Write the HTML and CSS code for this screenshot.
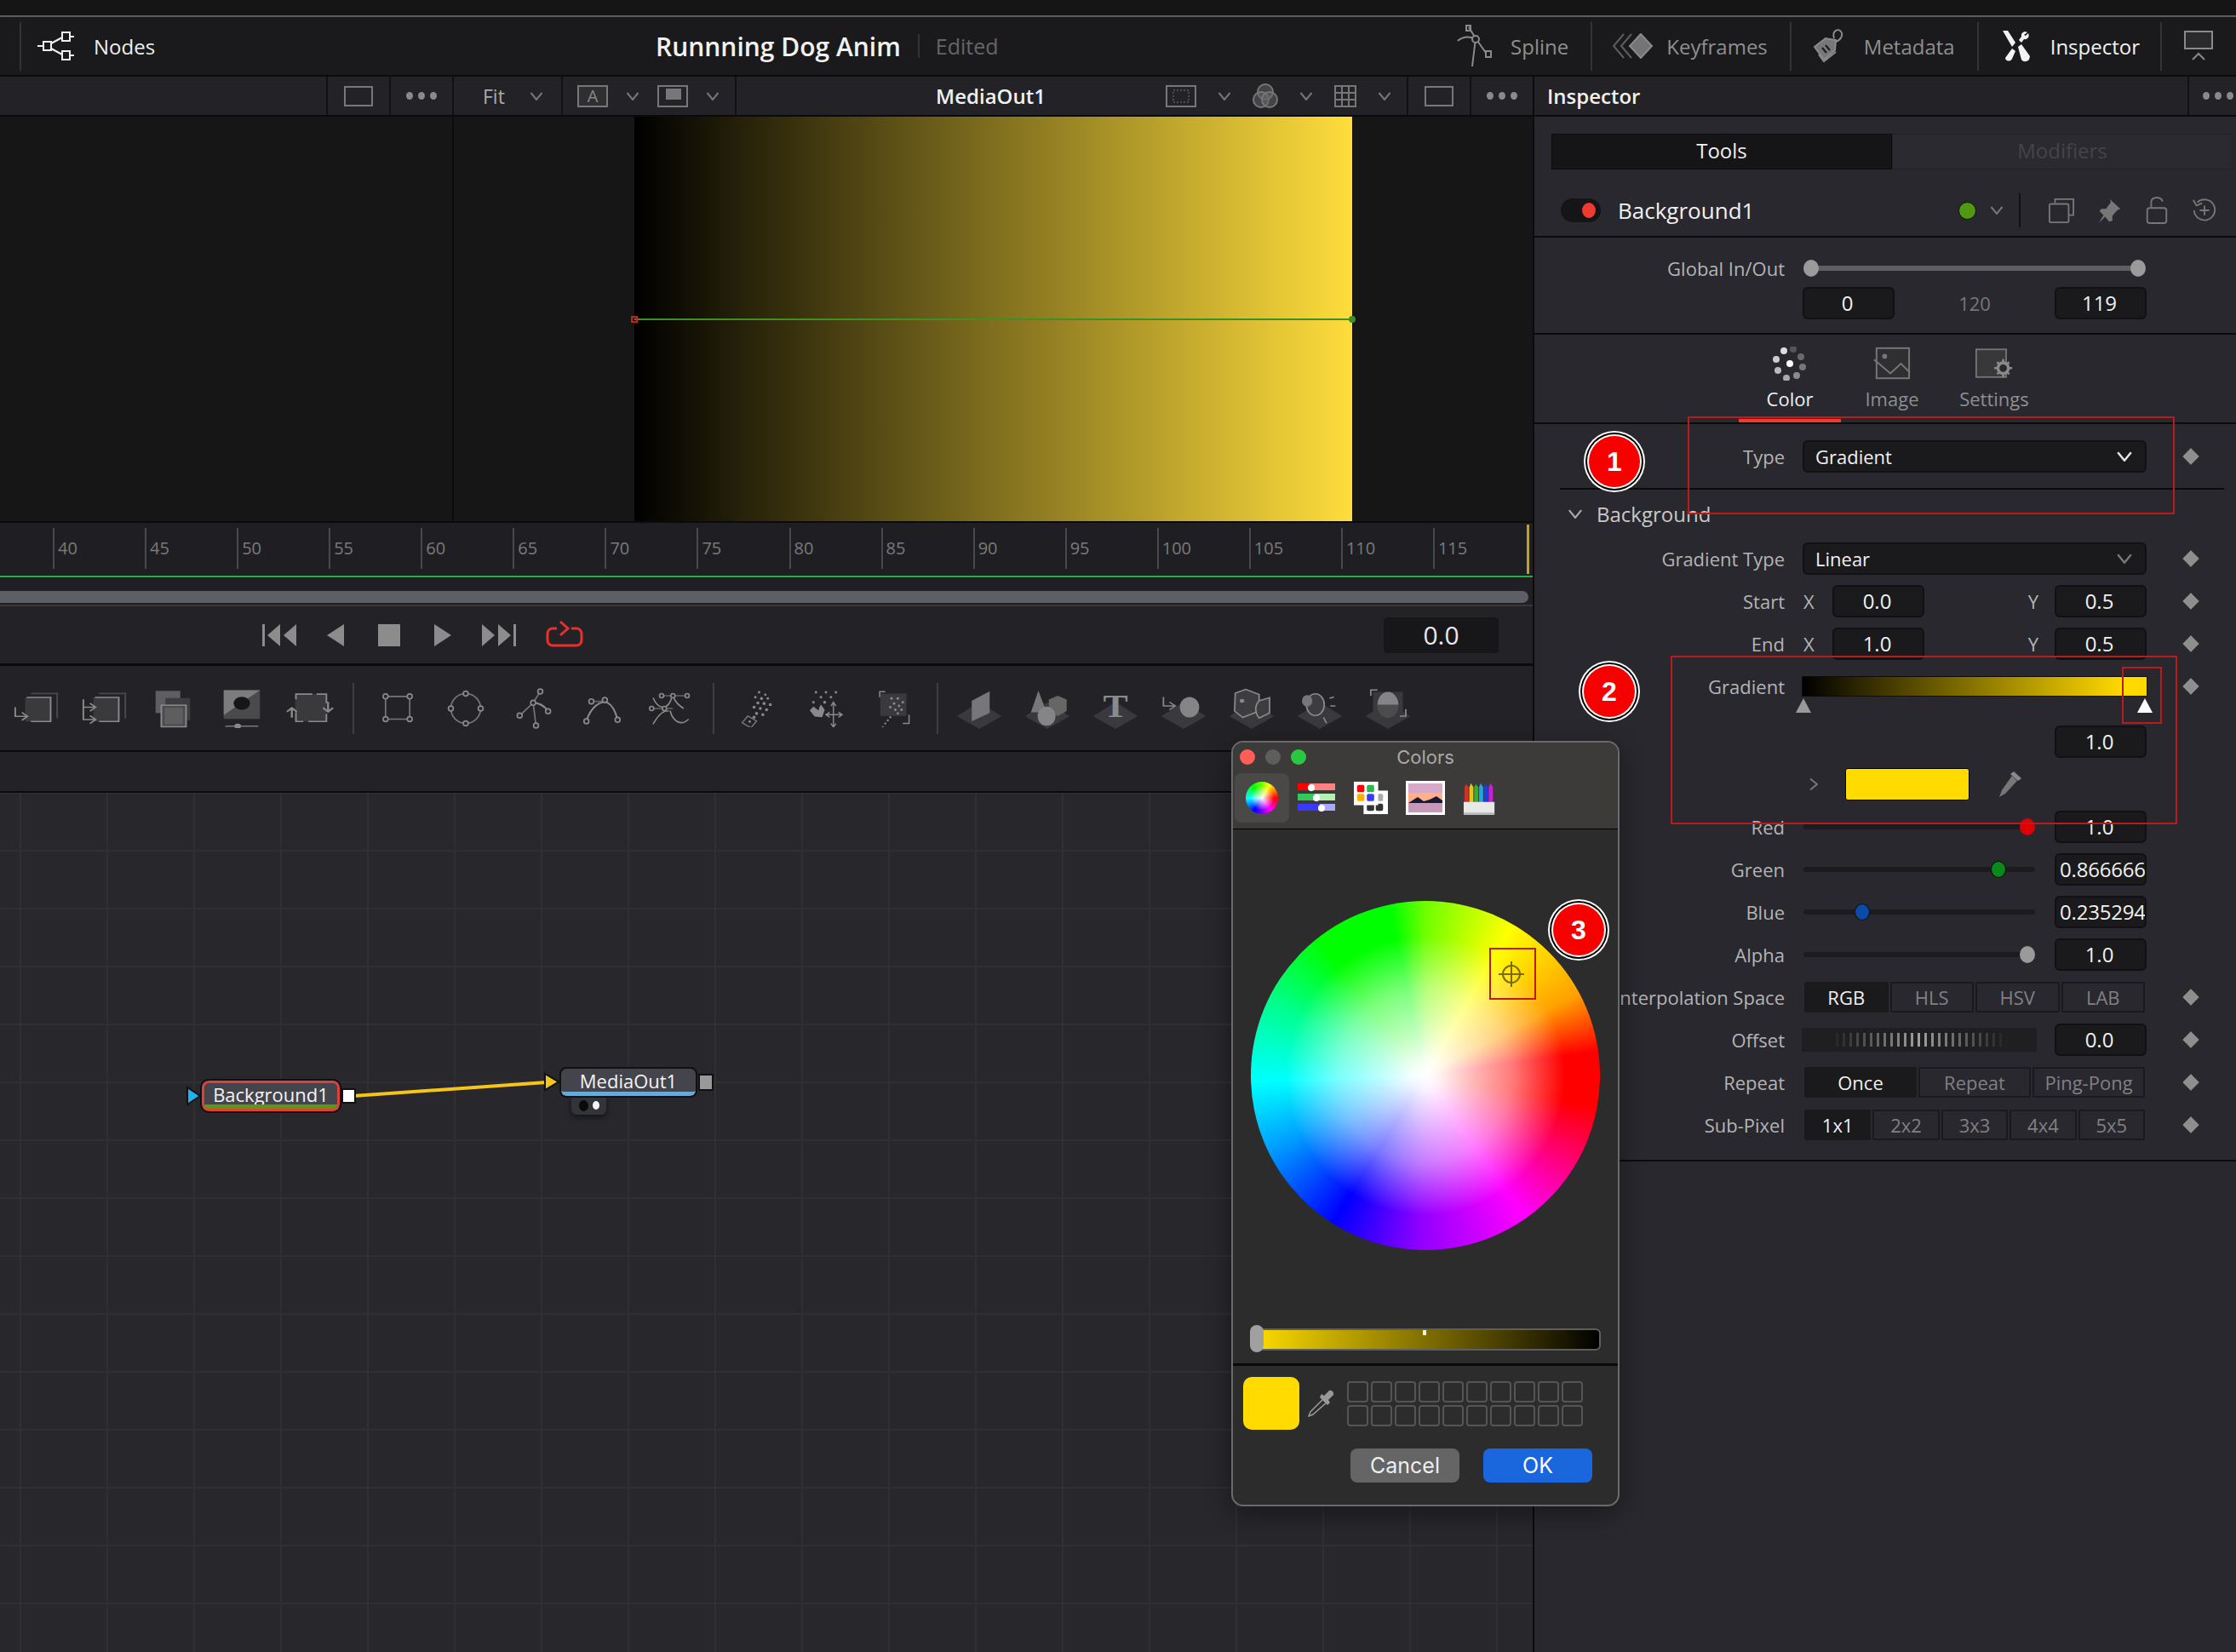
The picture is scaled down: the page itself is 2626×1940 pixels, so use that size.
FILE: index.html
```html
<!DOCTYPE html>
<html>
<head>
  <title>Running Dog Anim</title>
  <link rel="stylesheet" href="styles.css">
</head>
<body>

  <svg class="defs" width="0" height="0">
    <symbol id="chev" viewBox="0 0 16 10"><path d="M1.5 1l6.5 8 6.5-8" fill="none" stroke="currentColor" stroke-width="2"/></symbol>
    <symbol id="ground" viewBox="0 0 64 64" preserveAspectRatio="none"><path d="M32 22l30 22-30 20L2 44z" fill="#3a3a3e"/></symbol>
  </svg>

  <div class="app">
    <div class="top-strip"></div>

    <!-- Page bar -->
    <header class="topbar">
      <div class="nodes-tab">
        <svg class="ic-nodes" viewBox="0 0 45 34" fill="none" stroke="#eee" stroke-width="2">
          <rect x="8" y="12" width="9" height="10"/><rect x="30" y="1" width="9" height="10"/><rect x="30" y="23" width="9" height="10"/>
          <path d="M1 17h7M17 14l13-7M17 20l13 7M39 6h5M39 28h5"/>
        </svg>
        <span>Nodes</span>
      </div>
      <div class="title">Runnning Dog Anim</div>
      <span class="title-div"></span>
      <div class="edited">Edited</div>

      <div class="page-tabs">
        <div class="page-tab">
          <svg class="ic-spline" viewBox="0 0 48 50" fill="none" stroke="#8a8a8a" stroke-width="2">
            <path d="M1 19C8 13 14 14 22 16M14 3l8 13 12 17M22 16L18 49"/>
            <rect x="11" y="1" width="5" height="6"/><circle cx="22" cy="17" r="4" fill="#1a1a1c"/><rect x="34" y="31" width="6" height="7"/>
          </svg>
          <span>Spline</span>
        </div>
        <div class="page-tab">
          <svg class="ic-keys" viewBox="0 0 48 30" stroke="#5e5e5e" stroke-width="2" fill="none">
            <path d="M13 1L1 15l12 14M22 1L10 15l12 14"/><path d="M33 1L20 15l13 14 13-14z" fill="#747474" stroke="#8a8a8a"/>
          </svg>
          <span>Keyframes</span>
        </div>
        <div class="page-tab">
          <svg class="ic-meta" viewBox="0 0 38 40" fill="none" stroke="#8a8a8a" stroke-width="2">
            <path d="M3 21L16 11l12 2-1 12-13 11z" fill="#777"/><path d="M8 30l6 8 14-11"/><path d="M26 11c-3-9 5-12 8-8 3 4 0 10-6 12"/>
            <path d="M12 22l5 6M16 19l5 6" stroke="#1a1a1c"/>
          </svg>
          <span>Metadata</span>
        </div>
        <div class="page-tab active">
          <svg class="ic-insp" viewBox="0 0 34 38" fill="#f2f2f2">
            <path d="M1 1l6 0 9 14-4 5zM4 33l8-11 4 3-4 9c-2 4-8 3-8-1z"/>
            <path d="M30 3c-4-2-8 1-7 5l-3 4 3 3 3-4c4 1 7-3 5-7l-3 3-2-1z"/><path d="M19 20l4-3 10 14-1 4c-3 3-7 3-9 0z"/>
          </svg>
          <span>Inspector</span>
        </div>
        <div class="page-tab last">
          <svg class="ic-panel" viewBox="0 0 34 36" fill="none" stroke="#8a8a8a" stroke-width="2">
            <rect x="1" y="1" width="32" height="20" fill="#2a2a2c"/><path d="M1 21h32"/><path d="M10 34l7-7 7 7"/>
          </svg>
        </div>
      </div>
    </header>

    <div class="workspace">

      <div class="left-col">
        <!-- Viewer header -->
        <div class="viewer-bar">
          <div class="vb-space"></div>
          <div class="vb-cell vb-sq">
            <svg class="ic-box" viewBox="0 0 34 24" fill="none" stroke="#777" stroke-width="2"><rect x="1" y="1" width="32" height="22"/></svg>
          </div>
          <div class="vb-cell vb-sq"><div class="dots"><i></i><i></i><i></i></div></div>
          <div class="vb-cell vb-fit">
            <span>Fit</span>
            <svg class="chev"><use href="#chev"/></svg>
          </div>
          <div class="vb-cell vb-ab">
            <svg class="ic-a" viewBox="0 0 36 26">
              <rect x="1" y="1" width="34" height="24" fill="#2f2f32" stroke="#777" stroke-width="2"/>
              <text x="18" y="20" text-anchor="middle" class="svg-a">A</text>
            </svg>
            <svg class="chev"><use href="#chev"/></svg>
            <svg class="ic-a" viewBox="0 0 36 26" fill="none" stroke="#777" stroke-width="2">
              <rect x="1" y="1" width="34" height="24"/><rect x="10" y="4" width="18" height="13" fill="#777" stroke="none"/>
            </svg>
            <svg class="chev"><use href="#chev"/></svg>
          </div>
          <div class="vb-name">MediaOut1</div>
          <div class="vb-cell vb-tools">
            <svg class="ic-a" viewBox="0 0 36 26" fill="none" stroke="#777" stroke-width="2">
              <rect x="1" y="1" width="34" height="24"/><rect x="9" y="6" width="18" height="14" stroke-width="1" stroke-dasharray="2 2"/>
            </svg>
            <svg class="chev"><use href="#chev"/></svg>
            <svg class="ic-venn" viewBox="0 0 30 32" fill="#666" fill-opacity=".5" stroke="#777" stroke-width="2">
              <circle cx="15" cy="11" r="9"/><circle cx="10" cy="20" r="9"/><circle cx="20" cy="20" r="9"/>
            </svg>
            <svg class="chev"><use href="#chev"/></svg>
            <svg class="ic-grid" viewBox="0 0 26 26" fill="none" stroke="#777" stroke-width="2">
              <rect x="1" y="1" width="24" height="24"/><path d="M9 1v24M17 1v24M1 9h24M1 17h24"/>
            </svg>
            <svg class="chev"><use href="#chev"/></svg>
          </div>
          <div class="vb-cell vb-sq">
            <svg class="ic-box" viewBox="0 0 34 24" fill="none" stroke="#777" stroke-width="2"><rect x="1" y="1" width="32" height="22"/></svg>
          </div>
          <div class="vb-cell vb-sq vb-end"><div class="dots"><i></i><i></i><i></i></div></div>
        </div>

        <!-- Viewers -->
        <div class="viewers">
          <div class="viewer-a"></div>
          <div class="viewer-b">
            <div class="render">
              <div class="gline"></div>
              <div class="gpoint start"></div>
              <div class="gpoint end"></div>
            </div>
          </div>
        </div>

        <!-- Time ruler -->
        <div class="ruler">
          <div class="tick">40</div><div class="tick">45</div><div class="tick">50</div><div class="tick">55</div>
          <div class="tick">60</div><div class="tick">65</div><div class="tick">70</div><div class="tick">75</div>
          <div class="tick">80</div><div class="tick">85</div><div class="tick">90</div><div class="tick">95</div>
          <div class="tick">100</div><div class="tick">105</div><div class="tick">110</div><div class="tick">115</div>
          <div class="playhead"></div>
        </div>
        <div class="range-line"></div>
        <div class="scroll-wrap"><div class="scrollbar"></div></div>

        <!-- Transport -->
        <div class="transport">
          <svg class="tp-skip" viewBox="0 0 40 26" fill="#8c8c8c"><rect width="3" height="26"/><path d="M21 0v26L6 13zM40 0v26L25 13z"/></svg>
          <svg class="tp-arrow" viewBox="0 0 20 26" fill="#8c8c8c"><path d="M20 0v26L0 13z"/></svg>
          <div class="tp-stop"></div>
          <svg class="tp-arrow" viewBox="0 0 20 26" fill="#8c8c8c"><path d="M0 0v26l20-13z"/></svg>
          <svg class="tp-skip" viewBox="0 0 40 26" fill="#8c8c8c"><path d="M0 0v26l15-13zM19 0v26l15-13z"/><rect x="37" width="3" height="26"/></svg>
          <svg class="tp-loop" viewBox="0 0 44 32" fill="none" stroke="#ea3029" stroke-width="3">
            <path d="M13 10H8a6 6 0 0 0-6 6v8a6 6 0 0 0 6 6h28a6 6 0 0 0 6-6v-8a6 6 0 0 0-6-6h-6"/>
            <path d="M17 2l9 8-9 8"/>
          </svg>
          <div class="timecode">0.0</div>
        </div>

        <!-- Toolbar -->
        <div class="toolbar">
          <div class="tool wide">
            <svg viewBox="0 0 60 60" preserveAspectRatio="none" fill="none" stroke="#8a8a8a" stroke-width="2">
              <path d="M22 7h32v38" stroke="#4a4a4d"/><rect x="15" y="13" width="31" height="37" fill="#3a3a3d" stroke="none"/>
              <path d="M17 13h29v37H22"/><path d="M3 28v14h14M11 36l7 6-7 6"/>
            </svg>
          </div>
          <div class="tool wide">
            <svg viewBox="0 0 60 60" preserveAspectRatio="none" fill="none" stroke="#8a8a8a" stroke-width="2">
              <path d="M22 7h32v38" stroke="#4a4a4d"/><rect x="15" y="13" width="31" height="37" fill="#3a3a3d" stroke="none"/>
              <path d="M17 13h29v37H22"/><path d="M3 16v31h14M3 28h14M11 22l7 6-7 6M11 41l7 6-7 6"/>
            </svg>
          </div>
          <div class="tool wide">
            <svg viewBox="0 0 60 60" preserveAspectRatio="none">
              <rect x="8" y="3" width="30" height="34" fill="#5f5f62"/><rect x="20" y="14" width="30" height="34" fill="#3d3d40"/>
              <rect x="15" y="25" width="30" height="33" fill="#4c4c4f" stroke="#8a8a8a" stroke-width="2"/>
              <path d="M19 29h22v25H19z" fill="#6a6a6a" opacity=".6"/>
            </svg>
          </div>
          <div class="tool wide">
            <svg viewBox="0 0 60 60" preserveAspectRatio="none">
              <rect x="8" y="2" width="44" height="44" fill="#4a4a4c"/><path d="M8 2h44L8 40z" fill="#7c7c7c"/>
              <circle cx="30" cy="22" r="10" fill="#161616"/>
              <path d="M10 57h40" stroke="#7a7a7a" stroke-width="2"/><circle cx="25" cy="57" r="4" fill="#8a8a8a"/>
            </svg>
          </div>
          <div class="tool wide">
            <svg viewBox="0 0 60 60" preserveAspectRatio="none" fill="none" stroke="#8a8a8a" stroke-width="2">
              <rect x="12" y="8" width="38" height="42" fill="#3a3a3d" stroke="none"/>
              <path d="M13 16V8h20M38 8h12v14M50 38v12H28M22 50H13V36"/>
              <path d="M52 20v14M46 29l6 6 6-6M8 44V30M2 35l6-6 6 6" stroke-width="2.5"/>
            </svg>
          </div>
          <span class="tool-sep"></span>
          <div class="tool">
            <svg viewBox="0 0 60 60" fill="none" stroke="#8a8a8a" stroke-width="2">
              <path d="M13 13h34v32H13z" stroke="#777"/>
              <g fill="#27272b"><circle cx="13" cy="13" r="3.5"/><circle cx="47" cy="13" r="3.5"/><circle cx="13" cy="45" r="3.5"/><circle cx="47" cy="45" r="3.5"/></g>
            </svg>
          </div>
          <div class="tool">
            <svg viewBox="0 0 60 60" fill="none" stroke="#8a8a8a" stroke-width="2">
              <circle cx="30" cy="30" r="21" stroke="#777"/>
              <g fill="#27272b"><circle cx="30" cy="9" r="3.5"/><circle cx="30" cy="51" r="3.5"/><circle cx="9" cy="30" r="3.5"/><circle cx="51" cy="30" r="3.5"/></g>
            </svg>
          </div>
          <div class="tool">
            <svg viewBox="0 0 60 60" fill="none" stroke="#8a8a8a" stroke-width="2">
              <path d="M10 40L29 22l10-16M29 22l4 32" stroke="#777"/><path d="M29 22c10 0 17 6 21 12" stroke-width="2.5"/>
              <g fill="#27272b"><circle cx="39" cy="6" r="3.5"/><circle cx="29" cy="22" r="3.5"/><circle cx="50" cy="34" r="3.5"/><circle cx="10" cy="40" r="3.5"/><circle cx="33" cy="54" r="3.5"/></g>
            </svg>
          </div>
          <div class="tool">
            <svg viewBox="0 0 60 60" fill="none" stroke="#8a8a8a" stroke-width="2">
              <path d="M8 48C14 28 28 18 38 22c6 3 11 12 14 24" stroke-width="2.5"/><path d="M15 20h18" stroke="#666"/>
              <g fill="#27272b"><circle cx="15" cy="20" r="3.5"/><circle cx="34" cy="18" r="3.5"/><circle cx="8" cy="48" r="3.5"/><circle cx="52" cy="46" r="3.5"/></g>
            </svg>
          </div>
          <div class="tool">
            <svg viewBox="0 0 60 60" fill="none" stroke="#8a8a8a" stroke-width="2">
              <path d="M6 15c8 18 22 18 27-3M33 10c4 12 10 16 16 20"/><path d="M6 52c8-14 16-20 22-18M30 33c4 16 16 22 26 12"/>
              <path d="M16 12h38M4 30h30" stroke="#666"/>
              <g fill="#27272b"><circle cx="18" cy="12" r="3"/><circle cx="34" cy="12" r="3"/><circle cx="54" cy="12" r="3"/><circle cx="4" cy="30" r="3"/><circle cx="22" cy="30" r="3"/></g>
            </svg>
          </div>
          <span class="tool-sep"></span>
          <div class="tool pt">
            <svg viewBox="0 0 60 60" fill="#8a8a8a">
              <circle cx="32" cy="4" r="2"/><circle cx="42" cy="8" r="2"/><circle cx="26" cy="12" r="2"/><circle cx="36" cy="14" r="2.4"/><circle cx="46" cy="14" r="2"/><circle cx="30" cy="21" r="2.4"/><circle cx="40" cy="22" r="2.4"/><circle cx="50" cy="24" r="2.4"/><circle cx="24" cy="28" r="2.4"/><circle cx="34" cy="30" r="2.4"/><circle cx="44" cy="32" r="2.4"/><circle cx="28" cy="38" r="2.4"/><circle cx="38" cy="40" r="2.4"/><circle cx="24" cy="44" r="2.4"/>
              <path d="M14 42l14 8-9 11-14-8z" fill="none" stroke="#777" stroke-width="2"/><circle cx="17" cy="51" r="2"/>
            </svg>
          </div>
          <div class="tool pt">
            <svg viewBox="0 0 60 60" fill="#8a8a8a">
              <circle cx="14" cy="4" r="2"/><circle cx="30" cy="4" r="2"/><circle cx="46" cy="4" r="2"/><circle cx="22" cy="12" r="2"/><circle cx="38" cy="12" r="2"/><circle cx="10" cy="20" r="2"/><circle cx="28" cy="20" r="2.4"/>
              <path d="M22 24l6 8-4 12-12-1-8-10 6-6 8 6 2-6z"/>
              <path d="M42 20v40M32 40h24M38 26l4-6 4 6M38 54l4 6 4-6M36 36l-6 4 6 4M50 36l6 4-6 4" fill="none" stroke="#8a8a8a" stroke-width="2"/>
            </svg>
          </div>
          <div class="tool pt">
            <svg viewBox="0 0 60 60" fill="#8a8a8a">
              <rect x="8" y="6" width="42" height="36" fill="#3a3a3d"/><path d="M7 12V3h9M44 54h10V40" fill="none" stroke="#8a8a8a" stroke-width="2"/>
              <circle cx="26" cy="14" r="2"/><circle cx="36" cy="14" r="2"/><circle cx="44" cy="20" r="2"/><circle cx="30" cy="22" r="2"/><circle cx="38" cy="26" r="2"/><circle cx="24" cy="28" r="2"/><circle cx="32" cy="32" r="2"/><circle cx="42" cy="32" r="2"/><circle cx="36" cy="38" r="2"/><circle cx="24" cy="44" r="1.6"/><circle cx="20" cy="49" r="1.6"/><circle cx="16" cy="54" r="1.6"/><circle cx="12" cy="60" r="1.6"/>
            </svg>
          </div>
          <span class="tool-sep last"></span>
          <div class="tool d3">
            <svg viewBox="0 0 64 64" preserveAspectRatio="none"><use href="#ground"/><path d="M22 20L46 5v34L22 52z" fill="#77777a"/></svg>
          </div>
          <div class="tool d3">
            <svg viewBox="0 0 64 64" preserveAspectRatio="none"><use href="#ground"/><path d="M20 4l11 34H10z" fill="#77777a"/><path d="M34 18l12-6 12 6v18l-12 8-12-8z" fill="#666"/><ellipse cx="31" cy="44" rx="12" ry="15" fill="#858588"/></svg>
          </div>
          <div class="tool d3">
            <svg viewBox="0 0 64 64" preserveAspectRatio="none"><use href="#ground"/><text x="32" y="46" text-anchor="middle" class="svg-t">T</text></svg>
          </div>
          <div class="tool d3">
            <svg viewBox="0 0 64 64" preserveAspectRatio="none"><use href="#ground"/><path d="M5 14v14h14M13 22l8 6-8 6" fill="none" stroke="#8a8a8a" stroke-width="2"/><ellipse cx="40" cy="30" rx="13" ry="16" fill="#858588"/></svg>
          </div>
          <div class="tool d3">
            <svg viewBox="0 0 64 64" preserveAspectRatio="none"><use href="#ground"/><path d="M10 8l14-6 18 8v26L20 46 9 36z" fill="#3d3d40" stroke="#8a8a8a" stroke-width="2"/><circle cx="19" cy="20" r="3" fill="#8a8a8a"/><path d="M42 20l14-5v24l-14 8c-6-8-6-20 0-27z" fill="#3d3d40" stroke="#8a8a8a" stroke-width="2"/></svg>
          </div>
          <div class="tool d3">
            <svg viewBox="0 0 64 64" preserveAspectRatio="none"><use href="#ground"/><ellipse cx="26" cy="26" rx="12" ry="17" fill="#3d3d40" stroke="#8a8a8a" stroke-width="2"/><ellipse cx="15" cy="20" rx="7" ry="9" fill="#77777a"/><path d="M45 16l6-2M46 28h7M37 46l4 9" stroke="#8a8a8a" stroke-width="2"/></svg>
          </div>
          <div class="tool d3">
            <svg viewBox="0 0 64 64" preserveAspectRatio="none"><use href="#ground"/><rect x="12" y="6" width="40" height="34" fill="#3a3a3d"/><ellipse cx="32" cy="26" rx="14" ry="20" fill="#858588"/><path d="M18 26h28v2c0 10-6 18-14 18s-14-8-14-18z" fill="#4c4c4f"/><path d="M9 12V3h9M48 44h8V33" fill="none" stroke="#8a8a8a" stroke-width="2"/></svg>
          </div>
        </div>

        <div class="strip"></div>

        <!-- Node editor -->
        <div class="canvas">
          <svg class="wire" width="900" height="500" viewBox="0 0 900 500">
            <path d="M415 356L642 340" stroke="#f5c518" stroke-width="4"/>
            <path d="M220 346v20l15-10z" fill="#1fb2ee" stroke="#111" stroke-width="2"/>
            <path d="M640 330v19l16-9.5z" fill="#f5c518" stroke="#111" stroke-width="2"/>
            <rect x="402" y="348" width="15" height="16" fill="#fff" stroke="#111" stroke-width="2"/>
            <rect x="821" y="331" width="16" height="18" fill="#999" stroke="#111" stroke-width="2"/>
          </svg>
          <div class="node node-bg"><span>Background1</span></div>
          <div class="node-tab"><i class="big"></i><i class="small"></i></div>
          <div class="node node-out"><span>MediaOut1</span></div>
        </div>
      </div>

      <!-- Inspector -->
      <aside class="inspector">
        <div class="insp-bar">
          <div class="insp-title">Inspector</div>
          <div class="vb-cell insp-more"><div class="dots"><i></i><i></i><i></i></div></div>
        </div>

        <div class="mode-tabs">
          <div class="mode on">Tools</div>
          <div class="mode">Modifiers</div>
        </div>

        <div class="tool-head">
          <div class="pill"><i></i></div>
          <div class="tool-name">Background1</div>
          <div class="green-dot"></div>
          <svg class="chev"><use href="#chev"/></svg>
          <span class="head-sep"></span>
          <svg class="head-ic" viewBox="0 0 32 34" fill="none" stroke="#777" stroke-width="2"><path d="M8 8V3h23v20h-6"/><rect x="1" y="9" width="24" height="23" rx="2"/></svg>
          <svg class="head-ic" viewBox="0 0 32 34" fill="#777"><path d="M17 3l13 12-4 2-6 7 0 6-4 1-5-6-8 8 6-10-5-5 2-3 6 0 6-8z"/></svg>
          <svg class="head-ic" viewBox="0 0 32 34" fill="none" stroke="#777" stroke-width="2"><path d="M9 14V6a7 5 0 0 1 14 0"/><rect x="4" y="14" width="24" height="19" rx="3"/></svg>
          <svg class="head-ic" viewBox="0 0 32 34" fill="none" stroke="#777" stroke-width="2"><path d="M7 7a13 13 0 1 1-4 10"/><path d="M2 4l4 7 7-3" /><path d="M16 11v12M10 17h12"/></svg>
        </div>

        <div class="range-block">
          <div class="range-row">
            <div class="label">Global In/Out</div>
            <div class="range"><i class="knob left"></i><i class="knob right"></i></div>
          </div>
          <div class="range-inputs">
            <div class="field">0</div>
            <div class="range-mid">120</div>
            <div class="field">119</div>
          </div>
        </div>

        <div class="tabs">
          <div class="tab-item on">
            <svg viewBox="0 0 40 40">
              <circle cx="13" cy="5" r="4" fill="#ddd"/><circle cx="24" cy="3" r="4" fill="#555"/><circle cx="33" cy="12" r="4" fill="#6a6a6a"/><circle cx="35" cy="24" r="4" fill="#777"/><circle cx="28" cy="34" r="4" fill="#8a8a8a"/><circle cx="16" cy="37" r="4" fill="#aaa"/><circle cx="6" cy="28" r="4" fill="#bbb"/><circle cx="4" cy="15" r="4" fill="#ccc"/><circle cx="20" cy="20" r="4" fill="#fff"/>
            </svg>
            <span>Color</span>
          </div>
          <div class="tab-item">
            <svg viewBox="0 0 46 40" fill="none" stroke="#777" stroke-width="2">
              <rect x="4" y="1" width="40" height="37" fill="#2f2f32"/><path d="M1 15l20 17 13-12 11 11"/><circle cx="14" cy="11" r="3" fill="#777" stroke="none"/>
            </svg>
            <span>Image</span>
          </div>
          <div class="tab-item">
            <svg viewBox="0 0 50 40">
              <rect x="1" y="1" width="40" height="37" fill="#38383b" stroke="#777" stroke-width="2"/>
              <circle cx="37" cy="26" r="7" fill="#28282e" stroke="#8a8a8a" stroke-width="4"/>
              <path d="M37 14v5M37 33v5M25 26h5M44 26h5M29 18l3 3M42 31l3 3M29 34l3-3M42 21l3-3" stroke="#8a8a8a" stroke-width="3"/>
            </svg>
            <span>Settings</span>
          </div>
        </div>

        <div class="row type-row">
          <div class="label">Type</div>
          <div class="select">Gradient<svg class="chev bright"><use href="#chev"/></svg></div>
          <i class="diamond"></i>
        </div>

        <div class="section-head">
          <svg class="chev"><use href="#chev"/></svg>
          <span>Background</span>
        </div>

        <div class="form">
          <div class="row">
            <div class="label">Gradient Type</div>
            <div class="select">Linear<svg class="chev"><use href="#chev"/></svg></div>
            <i class="diamond"></i>
          </div>
          <div class="row">
            <div class="label">Start</div>
            <div class="xy"><span class="axis">X</span><div class="field">0.0</div><span class="axis ay">Y</span><div class="field">0.5</div></div>
            <i class="diamond"></i>
          </div>
          <div class="row">
            <div class="label">End</div>
            <div class="xy"><span class="axis">X</span><div class="field">1.0</div><span class="axis ay">Y</span><div class="field">0.5</div></div>
            <i class="diamond"></i>
          </div>
          <div class="row grad-row">
            <div class="label">Gradient</div>
            <div class="grad-bar"><i class="stop first"></i><i class="stop last"></i></div>
            <i class="diamond"></i>
          </div>
          <div class="row">
            <div class="label"></div>
            <div class="right-field"><div class="field">1.0</div></div>
          </div>
          <div class="row">
            <div class="label"></div>
            <div class="swatch-row">
              <svg class="chev side"><use href="#chev"/></svg>
              <div class="swatch"></div>
              <svg class="dropper" viewBox="0 0 30 34" fill="#777"><path d="M18 7l6 6-14 15-7 4 3-8z"/><path d="M20 2l9 8-4 3-9-8z" fill="#8a8a8a"/></svg>
            </div>
          </div>
          <div class="row">
            <div class="label">Red</div>
            <div class="color-ctl">
              <div class="slider"><i class="knob red" style="left: 96.7%"></i></div>
              <div class="field">1.0</div>
            </div>
          </div>
          <div class="row">
            <div class="label">Green</div>
            <div class="color-ctl">
              <div class="slider"><i class="knob green" style="left: 84.2%"></i></div>
              <div class="field long">0.866666</div>
            </div>
          </div>
          <div class="row">
            <div class="label">Blue</div>
            <div class="color-ctl">
              <div class="slider"><i class="knob blue" style="left: 25.3%"></i></div>
              <div class="field long">0.235294</div>
            </div>
          </div>
          <div class="row">
            <div class="label">Alpha</div>
            <div class="color-ctl">
              <div class="slider"><i class="knob" style="left: 96.7%"></i></div>
              <div class="field">1.0</div>
            </div>
          </div>
          <div class="row">
            <div class="label">Interpolation Space</div>
            <div class="seg"><b class="on">RGB</b><b>HLS</b><b>HSV</b><b>LAB</b></div>
            <i class="diamond"></i>
          </div>
          <div class="row">
            <div class="label">Offset</div>
            <div class="color-ctl">
              <div class="thumbwheel"></div>
              <div class="field">0.0</div>
            </div>
            <i class="diamond"></i>
          </div>
          <div class="row">
            <div class="label">Repeat</div>
            <div class="seg"><b class="on">Once</b><b>Repeat</b><b>Ping-Pong</b></div>
            <i class="diamond"></i>
          </div>
          <div class="row">
            <div class="label">Sub-Pixel</div>
            <div class="seg"><b class="on">1x1</b><b>2x2</b><b>3x3</b><b>4x4</b><b>5x5</b></div>
            <i class="diamond"></i>
          </div>
        </div>
        <div class="form-end"></div>
      </aside>
    </div>

    <!-- macOS colour panel -->
    <div class="colors">
      <div class="colors-head">
        <div class="colors-title">
          <div class="lights"><i class="l-red"></i><i class="l-off"></i><i class="l-green"></i></div>
          <span>Colors</span>
        </div>
        <div class="colors-tools">
          <div class="ct ct-on"><div class="mini-wheel"></div></div>
          <div class="ct">
            <svg viewBox="0 0 46 38">
              <rect x="1" y="2" width="44" height="8" fill="#ff8080"/><rect x="1" y="2" width="14" height="8" fill="#f00"/>
              <rect x="1" y="14" width="44" height="8" fill="#b4f0b4"/><rect x="1" y="14" width="20" height="8" fill="#34c759"/>
              <rect x="1" y="26" width="44" height="8" fill="#a8a8ff"/><rect x="1" y="26" width="26" height="8" fill="#3a3aff"/>
              <g fill="#fff"><circle cx="17" cy="7" r="4"/><circle cx="23" cy="19" r="4"/><circle cx="29" cy="31" r="4"/></g>
            </svg>
          </div>
          <div class="ct">
            <svg viewBox="0 0 44 42">
              <rect x="13" y="12" width="30" height="29" fill="#fff"/><rect x="28" y="16" width="9" height="9" rx="2" fill="#aaa"/><rect x="17" y="28" width="9" height="9" rx="2" fill="#333"/><rect x="28" y="28" width="9" height="9" rx="2" fill="#333"/>
              <rect x="1" y="1" width="30" height="29" fill="#fff"/><rect x="5" y="5" width="9" height="9" rx="2" fill="#f00"/><rect x="17" y="5" width="9" height="9" rx="2" fill="#2bb94a"/><rect x="5" y="16" width="9" height="9" rx="2" fill="#ffb000"/><rect x="17" y="16" width="9" height="9" rx="2" fill="#3a3aff"/>
            </svg>
          </div>
          <div class="ct">
            <svg viewBox="0 0 46 40">
              <rect width="46" height="40" fill="#fff"/><rect x="3" y="3" width="40" height="34" fill="#d8a8c8"/>
              <rect x="3" y="14" width="40" height="12" fill="#ffb088"/><path d="M3 26l11-7 7 5 7-2 8-4 7 5v3H3z" fill="#1a1a33"/><rect x="3" y="26" width="40" height="11" fill="#c898b8"/>
            </svg>
          </div>
          <div class="ct">
            <svg viewBox="0 0 40 42">
              <path d="M1 27V8l2-4 3 4v19z" fill="#d32f2f"/><path d="M7 27V8l2-5 3 5v19z" fill="#e6c514"/><path d="M13 27V8l2-4 3 4v19z" fill="#2cb52c"/><path d="M19 27V8l2-5 3 5v19z" fill="#1ea7e8"/><path d="M25 27V8l2-4 3 4v19z" fill="#1c3ee0"/><path d="M31 27V8l2-5 3 5v19z" fill="#c81ee0"/>
              <rect y="26" width="38" height="15" fill="#e8e8e8"/><rect y="39" width="38" height="3" fill="#bbb"/>
            </svg>
          </div>
        </div>
      </div>
      <div class="colors-body">
        <div class="wheel">
          <svg class="crosshair" viewBox="0 0 32 32" fill="none" stroke="#7a6a00" stroke-width="2"><circle cx="16" cy="16" r="10"/><path d="M16 1v30M1 16h30"/></svg>
        </div>
        <div class="bright-slider"><i class="mark"></i><i class="grip"></i></div>
      </div>
      <div class="colors-foot">
        <div class="foot-top">
          <div class="big-swatch"></div>
          <svg class="big-dropper" viewBox="0 0 32 32" fill="#999">
            <path d="M19 10l4 4L6 29l-5 2 2-5z" fill="none" stroke="#999" stroke-width="1.5"/><path d="M14 9l9 9 3-3-2-3 6-6c1-3-2-6-5-5l-6 6-3-2z"/>
          </svg>
          <div class="wells">
            <i></i><i></i><i></i><i></i><i></i><i></i><i></i><i></i><i></i><i></i>
            <i></i><i></i><i></i><i></i><i></i><i></i><i></i><i></i><i></i><i></i>
          </div>
        </div>
        <div class="foot-btns">
          <div class="btn cancel">Cancel</div>
          <div class="btn ok">OK</div>
        </div>
      </div>
    </div>

    <!-- Tutorial callouts -->
    <div class="mark-box box-type"></div>
    <div class="mark-box box-grad"></div>
    <div class="mark-box box-stop"></div>
    <div class="mark-box box-wheel"></div>
    <div class="callout c1">1</div>
    <div class="callout c2">2</div>
    <div class="callout c3">3</div>
  </div>

</body>
</html>
```

FILE: styles.css
```css
body {
  margin: 0;
  background: #1a1a1c;
  font-family: "Open Sans", "Noto Sans", sans-serif;
  color: #b4b4b4;
}

.defs {
  display: block;
}

svg {
  display: block;
  flex: none;
}

.app {
  position: relative;
  width: 2626px;
  height: 1940px;
  overflow: hidden;
  display: flex;
  flex-direction: column;
}

.top-strip {
  height: 18px;
  flex: none;
  background: #151516;
  border-bottom: 2px solid #5c5c5c;
}

/* page bar */

.topbar {
  height: 68px;
  flex: none;
  display: flex;
  align-items: center;
  background: #1a1a1c;
  border-bottom: 2px solid #0b0b0c;
}

.nodes-tab {
  width: 747px;
  height: 57px;
  margin-left: 23px;
  display: flex;
  align-items: center;
  gap: 22px;
  border-left: 2px solid #333;
  box-sizing: border-box;
  padding-left: 18px;
  font-size: 24px;
  color: #eee;
}

.ic-nodes {
  width: 45px;
  height: 34px;
}

.title {
  font-size: 30px;
  font-weight: 600;
  color: #f2f2f2;
}

.title-div {
  width: 2px;
  height: 28px;
  margin: 0 19px 0 20px;
  background: #333;
}

.edited {
  font-size: 25px;
  color: #666;
}

.page-tabs {
  margin-left: auto;
  display: flex;
  align-items: center;
  margin-right: 0;
}

.page-tab {
  height: 57px;
  display: flex;
  align-items: center;
  gap: 15px;
  padding: 0 26px 0 24px;
  border-right: 2px solid #333;
  font-size: 24px;
  color: #8f8f8f;
}

.page-tab.active {
  color: #f2f2f2;
  gap: 23px;
  padding: 0 24px 0 27px;
}

.page-tab.last {
  border: none;
  padding: 0 27px 0 26px;
}

.ic-spline { width: 48px; height: 50px; }
.ic-keys { width: 48px; height: 30px; }
.ic-meta { width: 38px; height: 40px; margin-right: 8px; }
.ic-insp { width: 34px; height: 38px; }
.ic-panel { width: 34px; height: 36px; }

.workspace {
  flex: 1;
  display: flex;
  min-height: 0;
}

.left-col {
  width: 1800px;
  flex: none;
  display: flex;
  flex-direction: column;
}

/* viewer header */

.viewer-bar {
  height: 45px;
  flex: none;
  display: flex;
  align-items: center;
  background: #232327;
  border-bottom: 2px solid #0b0b0c;
}

.vb-space {
  width: 383px;
  flex: none;
}

.vb-cell {
  height: 45px;
  box-sizing: border-box;
  display: flex;
  align-items: center;
  justify-content: center;
  flex: none;
  border-left: 2px solid #111;
}

.vb-sq {
  width: 74px;
}

.vb-end {
  border-right: 0;
}

.vb-fit {
  width: 128px;
  justify-content: flex-start;
  gap: 29px;
  padding-left: 34px;
  font-size: 23px;
  color: #aaa;
}

.vb-ab {
  width: 206px;
  gap: 21px;
  border-right: 2px solid #111;
  padding-right: 2px;
}

.vb-name {
  width: 487px;
  padding-left: 111px;
  text-align: center;
  font-size: 24px;
  font-weight: 600;
  color: #f0f0f0;
  box-sizing: border-box;
}

.vb-tools {
  width: 301px;
  gap: 25px;
  border-left: none;
  justify-content: flex-start;
  padding-left: 18px;
}

.chev {
  width: 16px;
  height: 10px;
  color: #777;
}

.chev.bright {
  color: #e6e6e6;
}

.chev.side {
  width: 16px;
  transform: rotate(-90deg);
}

.ic-box { width: 34px; height: 24px; }
.ic-a { width: 36px; height: 26px; }
.ic-venn { width: 30px; height: 32px; }
.ic-grid { width: 26px; height: 26px; }

.svg-a {
  font-size: 20px;
  fill: #888;
}

.svg-t {
  font-family: "Liberation Serif", serif;
  font-size: 50px;
  font-weight: bold;
  fill: #8a8a8a;
}

.dots {
  display: flex;
  flex: none;
  gap: 6px;
}

.dots i {
  width: 8px;
  height: 9px;
  border-radius: 50%;
  background: #8a8a8a;
}

/* viewers */

.viewers {
  height: 475px;
  flex: none;
  display: flex;
  background: #161616;
  border-bottom: 2px solid #0b0b0c;
}

.viewer-a {
  width: 531px;
  border-right: 2px solid #0b0b0c;
}

.viewer-b {
  flex: 1;
  padding-left: 212px;
}

.render {
  position: relative;
  width: 843px;
  height: 100%;
  background: linear-gradient(90deg, #000, #ffdd3c);
}

.gline {
  position: absolute;
  left: 0;
  right: 0;
  top: 237px;
  height: 2px;
  background: #3f8f22;
}

.gpoint {
  position: absolute;
  top: 234px;
  width: 8px;
  height: 8px;
  box-sizing: border-box;
}

.gpoint.start {
  left: -4px;
  border: 2px solid #c81e1e;
}

.gpoint.end {
  right: -4px;
  border-radius: 50%;
  background: #3f8f22;
}

/* ruler and transport */

.ruler {
  position: relative;
  height: 62px;
  flex: none;
  display: flex;
  padding-left: 62px;
  background: #1f1f23;
}

.tick {
  width: 108.07px;
  height: 48px;
  margin-top: 6px;
  padding: 11px 0 0 4px;
  box-sizing: border-box;
  flex: none;
  border-left: 2px solid #4a4a4e;
  font-size: 20px;
  line-height: 26px;
  color: #7a7a7a;
}

.playhead {
  position: absolute;
  left: 1793px;
  top: 2px;
  width: 3px;
  height: 58px;
  background: #c8a020;
}

.range-line {
  height: 2px;
  flex: none;
  background: #1fb040;
}

.scroll-wrap {
  height: 34px;
  flex: none;
  background: #202024;
  padding-top: 16px;
  box-sizing: border-box;
  border-bottom: 2px solid #3a3634;
}

.scrollbar {
  width: 1795px;
  height: 14px;
  background: #5c6066;
  border-radius: 0 7px 7px 0;
}

.transport {
  height: 67px;
  flex: none;
  display: flex;
  align-items: center;
  padding-left: 308px;
  background: #232327;
  border-bottom: 3px solid #0b0b0c;
}

.tp-skip {
  width: 40px;
  height: 26px;
}

.tp-arrow {
  width: 20px;
  height: 26px;
  margin-left: 36px;
}

.tp-stop {
  width: 26px;
  height: 26px;
  margin: 0 40px;
  background: #8c8c8c;
}

.tp-stop + .tp-arrow {
  margin-left: 0;
}

.tp-arrow + .tp-skip {
  margin-left: 36px;
}

.tp-loop {
  width: 44px;
  height: 32px;
  margin-left: 35px;
  margin-bottom: 4px;
}

.timecode {
  width: 135px;
  height: 42px;
  margin-left: auto;
  margin-right: 40px;
  background: #171719;
  border-radius: 4px;
  font-size: 30px;
  line-height: 42px;
  text-align: center;
  color: #e8e8e8;
}

.toolbar {
  height: 99px;
  flex: none;
  display: flex;
  align-items: center;
  padding-left: 4px;
  background: #232327;
  border-bottom: 2px solid #0b0b0c;
}

.tool {
  width: 80px;
  flex: none;
  display: flex;
  justify-content: center;
}

.tool svg {
  width: 50px;
  height: 50px;
}

.tool.wide svg {
  width: 58px;
  height: 46px;
}

.tool.pt svg {
  width: 46px;
  height: 44px;
}

.tool.d3 svg {
  width: 56px;
  height: 48px;
}

.tool-sep {
  width: 2px;
  height: 60px;
  flex: none;
  margin: 0 11px 0 10px;
  background: #3e3e42;
}

.tool-sep.last {
  margin: 0 8px 0 10px;
}

.strip {
  height: 46px;
  flex: none;
  background: #232327;
  border-bottom: 2px solid #0b0b0c;
}

/* node editor */

.canvas {
  position: relative;
  flex: 1;
  background-color: #27272c;
  background-image:
    linear-gradient(90deg, #2f2f34 2px, transparent 2px),
    linear-gradient(#2f2f34 2px, transparent 2px);
  background-size: 102px 68px;
  background-position: 23px -1px;
}

.wire {
  position: absolute;
  left: 0;
  top: 0;
}

.node {
  position: absolute;
  box-sizing: border-box;
  display: flex;
  justify-content: center;
  background: #44444d;
  font-size: 22px;
  color: #f4f4f4;
  outline: 2px solid #111;
}

.node span {
  line-height: 30px;
}

.node-bg {
  left: 237px;
  top: 338px;
  width: 162px;
  height: 36px;
  border: 3px solid #e0403c;
  border-radius: 8px;
}

.node-bg::after {
  content: "";
  position: absolute;
  left: 0;
  right: 0;
  bottom: 0;
  height: 5px;
  background: #5a9a10;
  border-radius: 0 0 4px 4px;
}

.node-bg span {
  line-height: 26px;
}

.node-out {
  left: 659px;
  top: 324px;
  width: 158px;
  height: 32px;
  border-bottom: 5px solid #6aa8d8;
  border-radius: 6px;
}

.node-out span {
  line-height: 28px;
}

.node-tab {
  position: absolute;
  left: 671px;
  top: 356px;
  width: 41px;
  height: 22px;
  display: flex;
  align-items: center;
  justify-content: center;
  gap: 5px;
  background: #33333a;
  border-radius: 0 0 6px 6px;
  box-shadow: 0 3px 6px rgba(0, 0, 0, .5);
}

.node-tab i {
  border-radius: 50%;
  height: 13px;
}

.node-tab .big {
  width: 11px;
  background: #0a0a0a;
}

.node-tab .small {
  width: 8px;
  height: 10px;
  background: #f4f4f4;
}

/* inspector */

.inspector {
  width: 824px;
  min-width: 0;
  flex: none;
  display: flex;
  flex-direction: column;
  background: #28282e;
  border-left: 2px solid #0b0b0c;
  font-size: 22px;
}

.insp-bar {
  height: 45px;
  flex: none;
  display: flex;
  align-items: center;
  background: #232327;
  border-bottom: 2px solid #0b0b0c;
}

.insp-title {
  width: 767px;
  flex: none;
  padding-left: 15px;
  box-sizing: border-box;
  font-size: 24px;
  font-weight: 600;
  color: #f0f0f0;
}

.insp-more {
  width: 57px;
  justify-content: flex-start;
  padding-left: 16px;
}

.mode-tabs {
  height: 42px;
  flex: none;
  display: flex;
  margin: 20px 4px 0 20px;
}

.mode {
  flex: 1;
  text-align: center;
  font-size: 24px;
  line-height: 38px;
  color: #44444a;
  background: #2a2a30;
  border: 1px solid #232327;
}

.mode.on {
  background: #151517;
  color: #f0f0f0;
  border-color: #0b0b0c;
}

.tool-head {
  height: 50px;
  flex: none;
  margin-top: 23px;
  padding-bottom: 5px;
  display: flex;
  align-items: center;
  border-bottom: 2px solid #0b0b0c;
}

.pill {
  width: 47px;
  height: 28px;
  margin-left: 31px;
  background: #151517;
  border-radius: 14px;
  display: flex;
  align-items: center;
  justify-content: flex-end;
  padding-right: 6px;
  box-sizing: border-box;
}

.pill i {
  width: 16px;
  height: 18px;
  border-radius: 50%;
  background: #f03a30;
}

.tool-name {
  width: 420px;
  padding-left: 20px;
  box-sizing: border-box;
  font-size: 26px;
  color: #f0f0f0;
}

.green-dot {
  width: 21px;
  height: 21px;
  border-radius: 50%;
  background: #4f9a10;
  border: 1px solid #111;
  box-sizing: border-box;
}

.tool-head .chev {
  margin-left: 16px;
}

.head-sep {
  width: 2px;
  height: 40px;
  margin: 0 33px 0 18px;
  background: #111;
}

.head-ic {
  width: 30px;
  height: 32px;
  margin-right: 26px;
}

.head-ic:last-child {
  margin-right: 0;
}

.range-block {
  height: 114px;
  flex: none;
  box-sizing: border-box;
  border-bottom: 2px solid #0b0b0c;
}

.range-row {
  height: 58px;
  padding-top: 14px;
  box-sizing: border-box;
  display: flex;
  align-items: center;
}

.label {
  width: 294px;
  flex: none;
  text-align: right;
  white-space: nowrap;
  font-size: 22px;
  color: #b4b4b4;
  direction: rtl;
  unicode-bidi: plaintext;
}

.range {
  position: relative;
  width: 384px;
  height: 6px;
  margin-left: 31px;
  background: #5f5f63;
}

.knob {
  position: absolute;
  top: 50%;
  width: 18px;
  height: 20px;
  margin: -10px 0 0 -9px;
  border-radius: 50%;
  background: #9a9a9a;
}

.range .knob.left { left: 0; }
.range .knob.right { left: 100%; }

.range-inputs {
  display: flex;
  align-items: center;
  margin-left: 315px;
  width: 404px;
  justify-content: space-between;
}

.range-mid {
  font-size: 22px;
  color: #777;
}

.field {
  width: 108px;
  height: 38px;
  flex: none;
  box-sizing: border-box;
  padding-right: 3px;
  background: #1a1a1c;
  border: 2px solid #111113;
  border-radius: 6px;
  font-size: 24px;
  line-height: 34px;
  text-align: center;
  color: #f0f0f0;
  overflow: hidden;
}

.field.long {
  padding: 0 0 0 4px;
  letter-spacing: -.2px;
  text-align: left;
  white-space: nowrap;
}

.tabs {
  height: 105px;
  flex: none;
  display: flex;
  padding-left: 240px;
  border-bottom: 2px solid #0b0b0c;
  box-sizing: border-box;
}

.tab-item {
  width: 120px;
  height: 103px;
  box-sizing: border-box;
  padding-top: 14px;
  display: flex;
  flex-direction: column;
  align-items: center;
  gap: 6px;
  color: #8f8f8f;
}

.tab-item svg {
  width: 44px;
  height: 40px;
}

.tab-item span {
  line-height: 30px;
}

.tab-item.on {
  color: #f0f0f0;
  border-bottom: 4px solid #ef3a30;
}

.row {
  height: 50px;
  flex: none;
  display: flex;
  align-items: center;
}

.type-row {
  margin-top: 13px;
}

.select {
  width: 404px;
  height: 38px;
  flex: none;
  margin-left: 21px;
  box-sizing: border-box;
  background: #1a1a1c;
  border: 2px solid #111113;
  border-radius: 6px;
  padding: 0 14px 0 13px;
  display: flex;
  align-items: center;
  justify-content: space-between;
  font-size: 22px;
  color: #f0f0f0;
}

.select .chev {
  width: 20px;
  height: 12px;
}

.diamond {
  width: 14px;
  height: 14px;
  flex: none;
  margin-left: 44px;
  background: #8e8e8e;
  border: 1px solid #111;
  transform: rotate(45deg);
  box-sizing: content-box;
}

.section-head {
  height: 58px;
  flex: none;
  margin: 12px 14px 0 30px;
  box-sizing: border-box;
  border-top: 2px solid #0b0b0c;
  display: flex;
  align-items: center;
  gap: 16px;
  font-size: 24px;
  color: #c8c8c8;
}

.section-head .chev {
  width: 18px;
  height: 11px;
  margin-left: 9px;
  color: #aaa;
}

.form {
  flex: none;
}

.xy {
  width: 404px;
  flex: none;
  margin-left: 21px;
  display: flex;
  align-items: center;
  font-size: 22px;
}

.axis {
  width: 35px;
  color: #b4b4b4;
  padding-left: 1px;
  box-sizing: border-box;
}

.axis.ay {
  width: 153px;
  text-align: right;
  padding-right: 19px;
}

.grad-row {
  height: 65px;
  position: relative;
  align-items: flex-start;
}

.grad-row .label {
  line-height: 50px;
}

.grad-row .diamond {
  margin-top: 17px;
}

.grad-bar {
  position: relative;
  width: 404px;
  height: 22px;
  margin: 14px 0 0 21px;
  flex: none;
  background: linear-gradient(90deg, #000, #ffd900 93%);
  box-shadow: 0 0 0 1px #0b0b0c;
}

.stop {
  position: absolute;
  top: 25px;
  width: 18px;
  height: 17px;
  clip-path: polygon(50% 0, 100% 100%, 0 100%);
}

.stop.first {
  left: -8px;
  background: #999;
}

.stop.last {
  right: -7px;
  background: #fff;
}

.right-field {
  width: 404px;
  margin-left: 21px;
  display: flex;
  justify-content: flex-end;
}

.swatch-row {
  width: 404px;
  margin-left: 21px;
  display: flex;
  align-items: center;
}

.swatch-row .chev.side {
  margin-left: 5px;
}

.swatch {
  width: 146px;
  height: 38px;
  margin-left: 29px;
  background: #ffdb00;
  border: 1px solid #000;
  border-radius: 3px;
  box-sizing: border-box;
}

.dropper {
  width: 30px;
  height: 34px;
  margin-left: 32px;
}

.color-ctl {
  width: 404px;
  margin-left: 21px;
  display: flex;
  align-items: center;
  justify-content: space-between;
}

.slider {
  position: relative;
  width: 272px;
  height: 6px;
  margin-left: 1px;
  background: #1c1c1f;
  border-radius: 3px;
}

.knob.red { background: #e00000; }
.knob.green { background: #0a8a1a; border: 1px solid #111; box-sizing: border-box; }
.knob.blue { background: #0a4aa8; border: 1px solid #111; box-sizing: border-box; }

.seg {
  width: 400px;
  height: 36px;
  flex: none;
  margin-left: 23px;
  display: flex;
  gap: 2px;
}

.seg b {
  flex: 1;
  box-sizing: border-box;
  background: #28282e;
  border: 2px solid #1a1a1c;
  border-radius: 2px;
  font-size: 22px;
  font-weight: 400;
  line-height: 32px;
  text-align: center;
  white-space: nowrap;
  color: #808084;
}

.seg b.on {
  background: #1a1a1c;
  color: #f0f0f0;
}

.seg + .diamond {
  margin-left: 46px;
}

.thumbwheel {
  position: relative;
  width: 276px;
  height: 28px;
  margin-left: -1px;
  background: #1f1f22;
}

.thumbwheel::after {
  content: "";
  position: absolute;
  inset: 6px 0;
  background: repeating-linear-gradient(90deg, #a0a0a0 0 3px, transparent 3px 8px);
  -webkit-mask-image: linear-gradient(90deg, transparent 12%, #000 50%, transparent 88%);
  mask-image: linear-gradient(90deg, transparent 12%, #000 50%, transparent 88%);
}

.form-end {
  margin-top: 16px;
  border-top: 2px solid #0b0b0c;
}

/* colour panel */

.colors {
  position: absolute;
  left: 1446px;
  top: 870px;
  width: 456px;
  height: 899px;
  box-sizing: border-box;
  display: flex;
  flex-direction: column;
  background: #2d2c2c;
  border: 2px solid #6a6a6a;
  border-radius: 14px;
  overflow: hidden;
  font-family: Inter, "Liberation Sans", sans-serif;
  box-shadow: 0 8px 30px rgba(0, 0, 0, .4);
}

.colors-head {
  height: 102px;
  flex: none;
  background: #3c3b3a;
  border-bottom: 1px solid #000;
  box-sizing: border-box;
}

.colors-title {
  position: relative;
  height: 36px;
  padding-bottom: 3px;
  box-sizing: border-box;
  display: flex;
  align-items: center;
  justify-content: center;
  font-size: 22px;
  color: #a8a8a8;
}

.lights {
  position: absolute;
  left: 8px;
  top: 8px;
  display: flex;
  gap: 12px;
}

.lights i {
  width: 18px;
  height: 18px;
  border-radius: 50%;
}

.l-red { background: #ff5f57; }
.l-off { background: #5e5e5e; }
.l-green { background: #2ac840; }

.colors-tools {
  display: flex;
  align-items: center;
  padding-left: 2px;
}

.ct {
  width: 64px;
  height: 58px;
  flex: none;
  display: flex;
  align-items: center;
  justify-content: center;
  border-radius: 8px;
}

.ct-on {
  background: #4a4948;
}

.ct svg {
  width: 46px;
  height: 40px;
}

.mini-wheel {
  width: 38px;
  height: 38px;
  border-radius: 50%;
  background:
    radial-gradient(circle closest-side, #fff 0, rgba(255, 255, 255, 0) 75%),
    conic-gradient(#70ff00, #ff0 30deg, #f00 90deg, #f0f 145deg, #00f 212deg, #0ff 268deg, #0f0 322deg, #70ff00);
}

.colors-body {
  flex: 1;
  display: flex;
  flex-direction: column;
  align-items: center;
  padding-top: 84px;
  border-bottom: 3px solid #0a0a0a;
  position: relative;
}

.wheel {
  position: relative;
  width: 410px;
  height: 410px;
  border-radius: 50%;
  background:
    radial-gradient(circle closest-side, #fff 0, rgba(255, 255, 255, .95) 8%, rgba(255, 255, 255, .75) 25%, rgba(255, 255, 255, .48) 50%, rgba(255, 255, 255, .22) 66%, rgba(255, 255, 255, 0) 80%),
    conic-gradient(#70ff00, #ff0 30deg, #ffa000 62deg, #f00 82deg, #f00 100deg, #ff0070 120deg, #f0f 145deg, #9000ff 182deg, #00f 212deg, #00a0ff 245deg, #0ff 268deg, #00ff90 295deg, #0f0 322deg, #0f0 348deg, #70ff00);
}

.crosshair {
  position: absolute;
  left: 290px;
  top: 70px;
  width: 32px;
  height: 32px;
}

.bright-slider {
  position: relative;
  width: 412px;
  height: 26px;
  margin-top: 92px;
  box-sizing: border-box;
  border: 2px solid #5e5e5e;
  border-radius: 6px;
  background: linear-gradient(90deg, #ffdd00, #000);
}

.bright-slider .grip {
  position: absolute;
  left: -2px;
  top: -6px;
  width: 16px;
  height: 32px;
  border-radius: 8px;
  background: #a0a0a0;
}

.bright-slider .mark {
  position: absolute;
  left: 201px;
  top: 0;
  width: 4px;
  height: 6px;
  background: #f4f0d8;
}

.colors-foot {
  height: 163px;
  flex: none;
  box-sizing: border-box;
  padding: 13px 30px 0 12px;
}

.foot-top {
  display: flex;
  align-items: center;
}

.big-swatch {
  width: 66px;
  height: 62px;
  flex: none;
  border-radius: 10px;
  background: #ffdb00;
}

.big-dropper {
  width: 32px;
  height: 32px;
  margin: 0 14px 0 10px;
}

.wells {
  display: grid;
  grid-template-columns: repeat(10, 25px);
  grid-auto-rows: 25px;
  gap: 3px;
}

.wells i {
  box-sizing: border-box;
  border: 2px solid #555;
  border-radius: 4px;
}

.foot-btns {
  display: flex;
  justify-content: flex-end;
  gap: 28px;
  margin-top: 22px;
}

.btn {
  width: 128px;
  height: 40px;
  border-radius: 8px;
  font-size: 25px;
  line-height: 40px;
  text-align: center;
  color: #eee;
}

.btn.cancel { background: #656565; }
.btn.ok { background: #1a66dd; color: #fff; }

/* callouts */

.mark-box {
  position: absolute;
  box-sizing: border-box;
  border: 2px solid #b81c1c;
}

.box-type { left: 1982px; top: 489px; width: 572px; height: 115px; }
.box-grad { left: 1962px; top: 770px; width: 595px; height: 198px; }
.box-stop { left: 2492px; top: 783px; width: 47px; height: 67px; }
.box-wheel { left: 1749px; top: 1113px; width: 55px; height: 61px; }

.callout {
  position: absolute;
  width: 60px;
  height: 60px;
  margin: -30px 0 0 -30px;
  border-radius: 50%;
  background: #f60000;
  box-shadow: 0 0 0 2px #fff, 0 0 0 4px #000, 0 0 0 6px #fff;
  font-family: "Liberation Sans", sans-serif;
  font-size: 32px;
  font-weight: bold;
  line-height: 60px;
  text-align: center;
  color: #fff;
}

.c1 { left: 1896px; top: 542px; }
.c2 { left: 1890px; top: 812px; }
.c3 { left: 1854px; top: 1092px; }
```
